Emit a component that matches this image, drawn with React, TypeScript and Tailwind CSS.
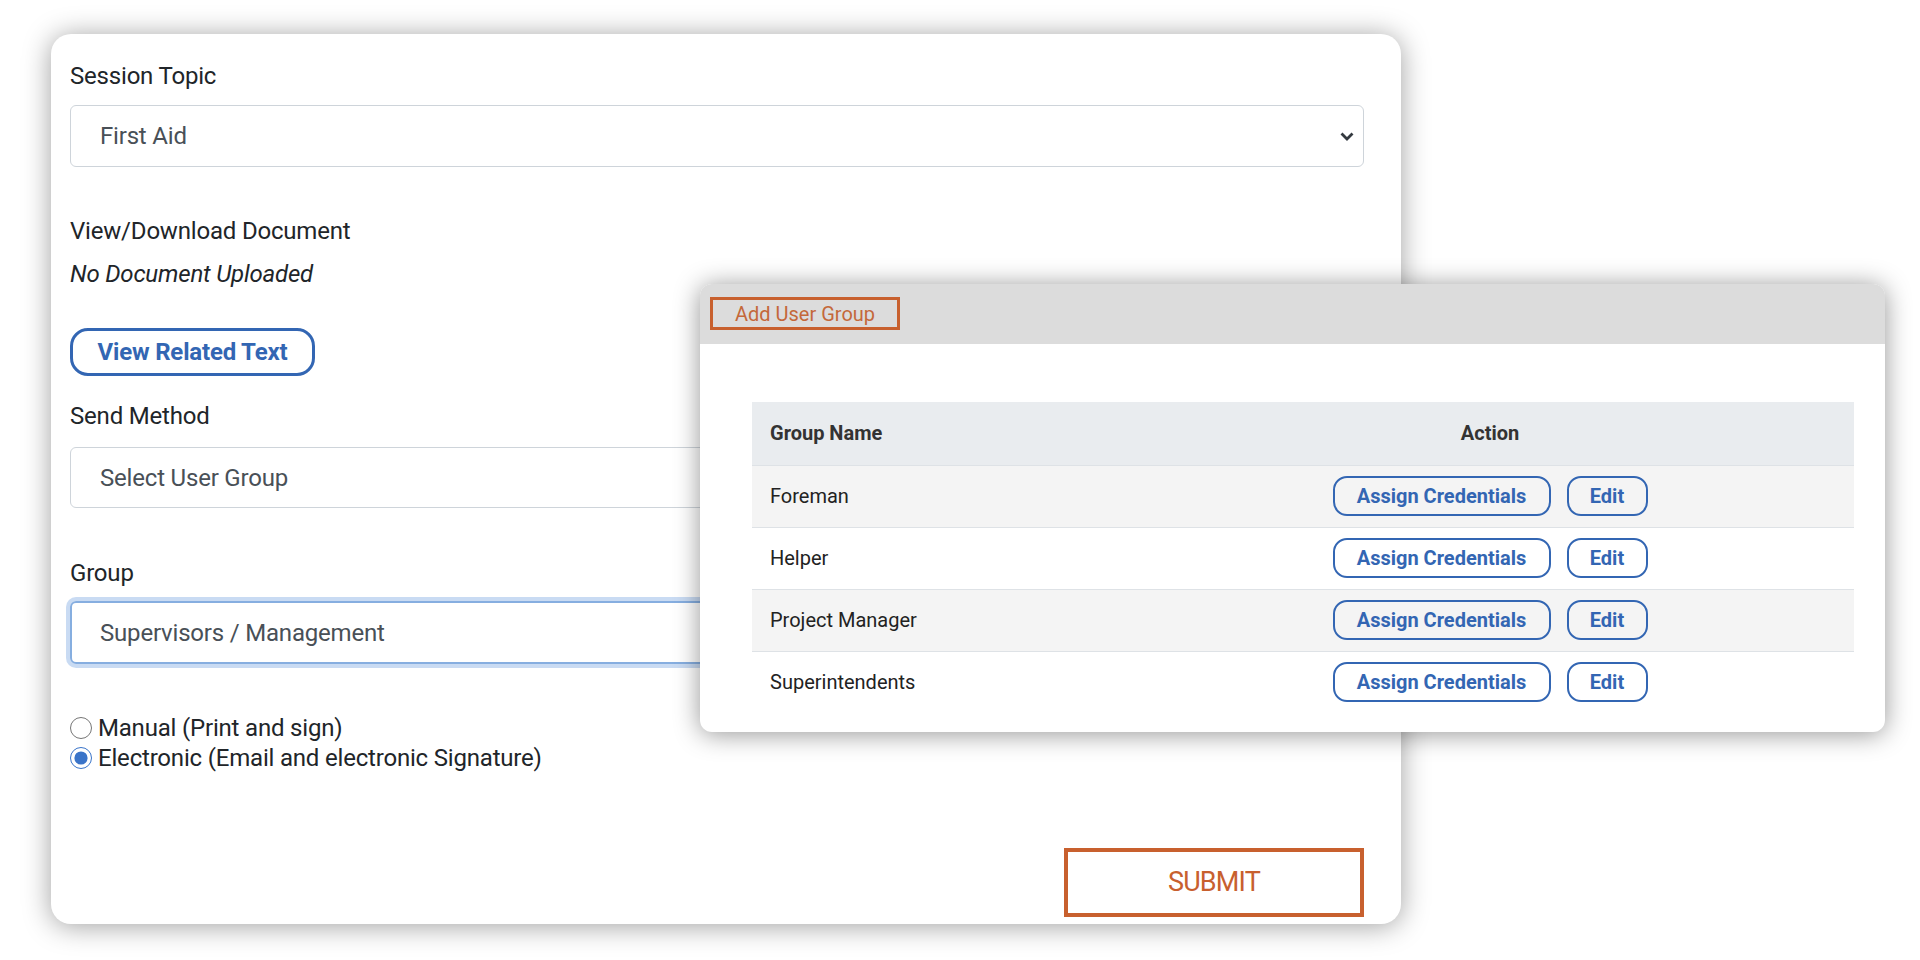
import React from 'react';

const groups = ['Foreman', 'Helper', 'Project Manager', 'Superintendents'];

const Chevron = () => (
  <svg width="16" height="11" viewBox="0 0 16 11" className="shrink-0">
    <polyline points="2.5,2.5 8,8 13.5,2.5" fill="none" stroke="#343a40" strokeWidth="2.8" />
  </svg>
);

export default function App() {
  return (
    <div className="relative w-[1920px] h-[960px] bg-white overflow-hidden font-['Roboto',sans-serif] text-[#212529]">
      {/* main form card */}
      <div className="ml-[51px] mt-[34px] w-[1350px] h-[890px] bg-white rounded-[20px] shadow-[0_2px_28px_rgba(0,0,0,0.38)] pl-[19px] pr-[37px] pt-[27px] flex flex-col tracking-[-0.012em]">
        <div className="text-[24px] leading-[30px]">Session Topic</div>
        <div className="mt-[14px] h-[62px] border border-[#ced4da] rounded-[6px] flex items-center justify-between pl-[29px] pr-[8px] text-[24px] text-[#495057]">
          <span>First Aid</span>
          <Chevron />
        </div>

        <div className="mt-[49px] text-[24px] leading-[30px]">View/Download Document</div>
        <div className="mt-[13px] text-[24px] leading-[30px] italic">No Document Uploaded</div>

        <button className="mt-[39px] w-[245px] h-[48px] border-[3px] border-[#3366b3] rounded-[18px] text-[24px] font-bold text-[#3366b3] flex items-center justify-center">
          View Related Text
        </button>

        <div className="mt-[25px] text-[24px] leading-[30px]">Send Method</div>
        <div className="mt-[16px] h-[61px] border border-[#ced4da] rounded-[6px] flex items-center justify-between pl-[29px] pr-[8px] text-[24px] text-[#495057]">
          <span>Select User Group</span>
          <Chevron />
        </div>

        <div className="mt-[50px] text-[24px] leading-[30px]">Group</div>
        <div className="mt-[13px] h-[63px] border-2 border-[#86aee0] rounded-[6px] shadow-[0_0_0_4px_rgba(120,165,225,0.4)] flex items-center justify-between pl-[28px] pr-[7px] text-[24px] text-[#495057]">
          <span>Supervisors / Management</span>
          <Chevron />
        </div>

        <div className="mt-[49px] flex flex-col text-[24px] leading-[30px]">
          <label className="flex items-center gap-[6px]">
            <input type="radio" name="method" className="w-[22px] h-[22px] m-0 accent-[#3a74c9]" />
            Manual (Print and sign)
          </label>
          <label className="flex items-center gap-[6px]">
            <input type="radio" name="method" defaultChecked className="w-[22px] h-[22px] m-0 accent-[#3a74c9]" />
            Electronic (Email and electronic Signature)
          </label>
        </div>

        <div className="mt-auto mb-[7px] flex justify-end">
          <button className="w-[300px] h-[69px] border-[4px] border-[#c8602e] text-[27px] text-[#c8602e] tracking-[-0.03em]">
            SUBMIT
          </button>
        </div>
      </div>

      {/* user group popup */}
      <div className="absolute left-[700px] top-[284px] w-[1185px] h-[448px] bg-white rounded-[12px] shadow-[0_2px_26px_rgba(0,0,0,0.42)] flex flex-col overflow-hidden">
        <div className="h-[60px] bg-[#dcdcdc] pl-[10px] pt-[13px] shrink-0">
          <div className="w-[190px] h-[33px] border-[3px] border-[#c8602e] pl-[22px] flex items-center text-[20px] text-[#c4683a]">
            Add User Group
          </div>
        </div>
        <div className="pt-[58px] pl-[52px] pr-[31px]">
          <table className="w-full border-collapse text-[20px]">
            <thead>
              <tr className="bg-[#e9ecef] h-[63px] border-b border-[#dee2e6]">
                <th className="w-[374px] text-left pl-[18px] font-bold text-[#333]">Group Name</th>
                <th className="text-center font-bold text-[#333]">Action</th>
              </tr>
            </thead>
            <tbody>
              {groups.map((g, i) => (
                <tr key={g} className={`h-[62px] ${i < groups.length - 1 ? 'border-b border-[#dee2e6]' : ''} ${i % 2 === 0 ? 'bg-[#f4f4f4]' : 'bg-white'}`}>
                  <td className="pl-[18px] text-[#222]">{g}</td>
                  <td>
                    <div className="flex justify-center gap-[16px]">
                      <button className="w-[218px] h-[40px] border-2 border-[#3366b3] rounded-[14px] font-bold text-[#3366b3]">
                        Assign Credentials
                      </button>
                      <button className="w-[81px] h-[40px] border-2 border-[#3366b3] rounded-[14px] font-bold text-[#3366b3]">
                        Edit
                      </button>
                    </div>
                  </td>
                </tr>
              ))}
            </tbody>
          </table>
        </div>
      </div>
    </div>
  );
}
